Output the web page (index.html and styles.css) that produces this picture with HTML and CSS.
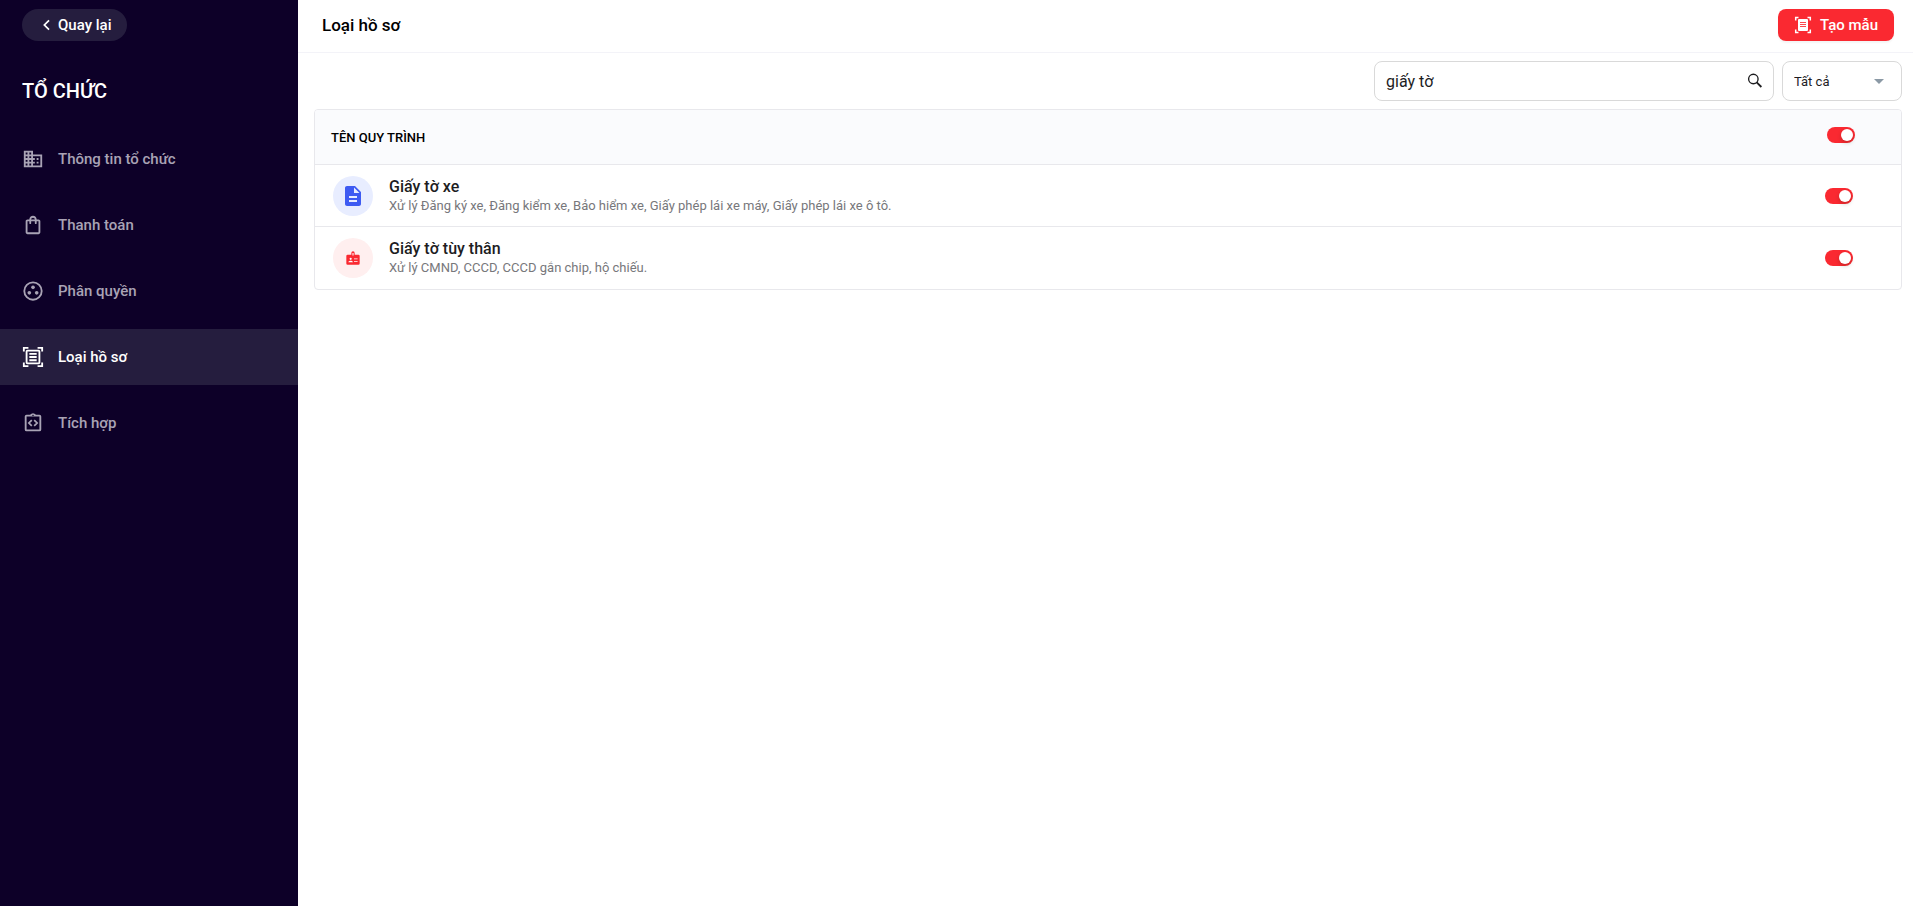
FILE: index.html
```html
<!DOCTYPE html>
<html lang="vi">
<head>
<meta charset="utf-8">
<meta name="viewport" content="width=device-width, initial-scale=1">
<title>Loại hồ sơ</title>
<link rel="stylesheet" href="styles.css">
</head>
<body>
<svg class="sprite" aria-hidden="true">
  <symbol id="i-scan" viewBox="0 0 24 24">
    <path fill="currentColor" d="M1 1h6v2H3v3H1zM17 1h6v5h-2V3h-4zM1 18h2v3h4v2H1zM21 18h2v5h-6v-2h4z"/>
    <path fill="currentColor" fill-rule="evenodd" d="M6 4h12a2 2 0 0 1 2 2v12a2 2 0 0 1-2 2H6a2 2 0 0 1-2-2V6a2 2 0 0 1 2-2zm0 2v12h12V6z"/>
    <path fill="currentColor" d="M8 7.500h8v2H8zM8 11h8v2H8zM8 14.500h8v2H8z"/>
  </symbol>
</svg>
<div class="app">
  <aside class="sidebar">
    <button class="back" type="button">
      <svg class="back-icon" viewBox="0 0 24 24" aria-hidden="true"><path d="M15.500 4l-8 8 8 8" fill="none" stroke="currentColor" stroke-width="3"/></svg>
      Quay lại
    </button>
    <h2 class="org">TỔ CHỨC</h2>
    <nav class="nav">
      <a class="nav-link" href="#org">
        <svg class="nav-icon" viewBox="0 0 24 24" aria-hidden="true"><path fill="currentColor" d="M12 7V3H2v18h20V7H12zM6 19H4v-2h2v2zm0-4H4v-2h2v2zm0-4H4V9h2v2zm0-4H4V5h2v2zm4 12H8v-2h2v2zm0-4H8v-2h2v2zm0-4H8V9h2v2zm0-4H8V5h2v2zm10 12h-8v-2h2v-2h-2v-2h2v-2h-2V9h8v10zm-2-8h-2v2h2v-2zm0 4h-2v2h2v-2z"/></svg>
        Thông tin tổ chức
      </a>
      <a class="nav-link" href="#pay">
        <svg class="nav-icon" viewBox="0 0 24 24" aria-hidden="true"><path fill="currentColor" d="M18 6h-2c0-2.210-1.790-4-4-4S8 3.790 8 6H6c-1.100 0-2 .9-2 2v12c0 1.100.9 2 2 2h12c1.100 0 2-.9 2-2V8c0-1.100-.9-2-2-2zm-6-2c1.100 0 2 .9 2 2h-4c0-1.100.9-2 2-2zm6 16H6V8h2v2c0 .55.45 1 1 1s1-.45 1-1V8h4v2c0 .55.45 1 1 1s1-.45 1-1V8h2v12z"/></svg>
        Thanh toán
      </a>
      <a class="nav-link" href="#roles">
        <svg class="nav-icon" viewBox="0 0 24 24" aria-hidden="true"><circle cx="12" cy="12" r="9.500" fill="none" stroke="currentColor" stroke-width="2"/><g fill="currentColor"><circle cx="12" cy="8" r="2"/><circle cx="8" cy="14" r="2"/><circle cx="16" cy="14" r="2"/></g></svg>
        Phân quyền
      </a>
      <a class="nav-link active" href="#types" aria-current="page">
        <svg class="nav-icon" viewBox="0 0 24 24" aria-hidden="true"><use href="#i-scan"/></svg>
        Loại hồ sơ
      </a>
      <a class="nav-link" href="#integrations">
        <svg class="nav-icon" viewBox="0 0 24 24" aria-hidden="true"><g fill="none" stroke="currentColor"><rect x="4" y="4" width="16" height="16" rx="1" stroke-width="2"/><path d="M10.700 8.800L7.500 12l3.200 3.200M13.300 8.800l3.200 3.200-3.200 3.200" stroke-width="1.900"/></g><path fill="currentColor" d="M8.500 4A3.600 3.600 0 0 1 15.500 4z"/><circle cx="12" cy="3.700" r=".8" fill="#0d0028"/></svg>
        Tích hợp
      </a>
    </nav>
  </aside>
  <main class="main">
    <header class="topbar">
      <h1 class="title">Loại hồ sơ</h1>
      <button class="create" type="button">
        <svg class="create-icon" viewBox="0 0 18 18" aria-hidden="true"><path d="M1.700 4.500V1.500H4.500M13.500 1.500h2.800v3M1.700 13.500v3H4.500M13.500 16.500h2.800v-3" fill="none" stroke="currentColor" stroke-width="1.500"/><rect x="4" y="3" width="10" height="12" rx="1" fill="currentColor"/><path fill="#fa2931" d="M6 6h6v1H6zM6 8h6v1H6zM6 10h6v1H6z" opacity=".85"/></svg>
        Tạo mẫu
      </button>
    </header>
    <div class="filters">
      <div class="search">
        <input class="search-input" type="text" value="giấy tờ" aria-label="Tìm kiếm">
        <button class="search-button" type="button" aria-label="Tìm">
          <svg class="search-icon" viewBox="0 0 24 24" aria-hidden="true"><g fill="none" stroke="currentColor"><circle cx="9.800" cy="9.300" r="6.300" stroke-width="1.800"/><path d="M14.300 13.800l6.200 6.200" stroke-width="2.400"/></g></svg>
        </button>
      </div>
      <div class="picker">
        <select class="select" aria-label="Trạng thái"><option>Tất cả</option></select>
        <svg class="caret" viewBox="0 0 10 5" aria-hidden="true"><path d="M0 0h10L5 5z" fill="currentColor"/></svg>
      </div>
    </div>
    <div class="card">
      <table class="table">
        <thead>
          <tr>
            <th class="name-head" scope="col">TÊN QUY TRÌNH</th>
            <th class="toggle-head"><input class="toggle" type="checkbox" role="switch" checked aria-label="Bật tất cả"></th>
          </tr>
        </thead>
        <tbody>
          <tr>
            <td class="name-cell">
              <div class="item">
                <span class="badge blue"><svg class="badge-icon" viewBox="0 0 24 24" aria-hidden="true"><path fill="currentColor" d="M14 2H6c-1.100 0-2 .9-2 2v16c0 1.100.9 2 2 2h12c1.100 0 2-.9 2-2V8l-6-6zm2 16H8v-2h8v2zm0-4H8v-2h8v2zm-3-5V3.500L18.500 9H13z"/></svg></span>
                <div class="item-text">
                  <div class="item-title">Giấy tờ xe</div>
                  <div class="item-desc">Xử lý Đăng ký xe, Đăng kiểm xe, Bảo hiểm xe, Giấy phép lái xe máy, Giấy phép lái xe ô tô.</div>
                </div>
              </div>
            </td>
            <td class="toggle-cell"><input class="toggle" type="checkbox" role="switch" checked aria-label="Giấy tờ xe"></td>
          </tr>
          <tr>
            <td class="name-cell">
              <div class="item">
                <span class="badge red"><svg class="badge-icon" viewBox="0 0 24 24" aria-hidden="true"><path fill="currentColor" fill-rule="evenodd" d="M5.500 8H10V6a2 2 0 0 1 4 0v2h4.500A1.500 1.500 0 0 1 20 9.500v9a1.500 1.500 0 0 1-1.500 1.500h-13A1.500 1.500 0 0 1 4 18.500v-9A1.500 1.500 0 0 1 5.500 8zM11.300 6v3h1.400V6z"/><g fill="#fff"><circle cx="9.200" cy="13" r="1.300"/><path d="M6.500 17c0-2.400 5.400-2.400 5.400 0zM13.200 12.500h4.300v1h-4.300zM13.200 15.500h4.300v1h-4.300z"/></g></svg></span>
                <div class="item-text">
                  <div class="item-title">Giấy tờ tùy thân</div>
                  <div class="item-desc">Xử lý CMND, CCCD, CCCD gắn chip, hộ chiếu.</div>
                </div>
              </div>
            </td>
            <td class="toggle-cell"><input class="toggle" type="checkbox" role="switch" checked aria-label="Giấy tờ tùy thân"></td>
          </tr>
        </tbody>
      </table>
    </div>
  </main>
</div>
</body>
</html>
```
FILE: styles.css
```css
* { box-sizing: border-box; }
body {
  margin: 0;
  background: #fff;
  color: #1d1d1f;
  font-family: Roboto, "Noto Sans", sans-serif;
  font-size: 14px;
}
button, input, select { font: inherit; color: inherit; }
.sprite { display: none; }
.app { display: flex; min-height: 100vh; }

.sidebar { flex: 0 0 298px; background: #0d0028; color: #fff; padding-top: 9px; }
.back {
  display: flex;
  align-items: center;
  gap: 4px;
  height: 32px;
  margin-left: 22px;
  padding: 0 16px 0 18px;
  border: 0;
  border-radius: 16px;
  background: #251d3e;
  font-size: 15px;
  font-weight: 500;
}
.back-icon { width: 14px; height: 14px; }
.org { margin: 36px 22px 0; font-size: 20px; font-weight: 500; line-height: 28px; }
.nav { display: flex; flex-direction: column; gap: 10px; margin-top: 26px; }
.nav-link {
  display: flex;
  align-items: center;
  gap: 14px;
  height: 56px;
  padding: 0 22px;
  color: #a9a3b5;
  font-size: 15px;
  font-weight: 500;
  text-decoration: none;
}
.nav-link.active { background: #251d3e; color: #fff; }
.nav-icon { width: 22px; height: 22px; }

.main { flex: 1; min-width: 0; }
.topbar {
  display: flex;
  align-items: center;
  justify-content: space-between;
  height: 53px;
  padding: 0 19px 2px 24px;
  border-bottom: 1px solid #f3f3f8;
}
.title { margin: 0; color: #000; font-size: 17px; font-weight: 500; line-height: 24px; }
.create {
  display: flex;
  align-items: center;
  gap: 8px;
  height: 32px;
  padding: 0 16px;
  border: 0;
  border-radius: 8px;
  background: #fa2931;
  box-shadow: 0 2px 2px #0000000b;
  color: #fff;
  font-size: 15px;
  font-weight: 500;
}
.create-icon { width: 18px; height: 18px; }

.filters { display: flex; justify-content: flex-end; gap: 8px; padding: 8px 11px 8px 16px; }
.search {
  display: flex;
  align-items: center;
  width: 400px;
  height: 40px;
  border: 1px solid #d9d9d9;
  border-radius: 8px;
}
.search-input { flex: 1; min-width: 0; padding: 0 11px; border: 0; outline: 0; background: none; font-size: 16px; }
.search-button { display: flex; padding: 0 9px; border: 0; background: none; }
.search-icon { width: 18px; height: 18px; }
.picker { position: relative; width: 120px; height: 40px; }
.select {
  width: 100%;
  height: 100%;
  padding: 0 11px;
  border: 1px solid #d9d9d9;
  border-radius: 8px;
  appearance: none;
  background: #fff;
  font-size: 13px;
}
.caret { position: absolute; top: 18px; right: 18px; width: 10px; height: 5px; color: #8b99a5; pointer-events: none; }

.card { margin: 0 11px 0 16px; border: 1px solid #e8e8ec; border-radius: 4px; overflow: hidden; }
.table { width: 100%; border-collapse: separate; border-spacing: 0; }
.table th { height: 55px; padding: 0; border-bottom: 1px solid #e8e8ec; background: #fafbfd; text-align: left; }
.table .name-head { padding-left: 16px; color: #000; font-size: 13px; font-weight: 500; }
.toggle-head { width: 76px; }
.table .toggle-head { padding: 0 0 5px 2px; }
.table td { height: 62px; padding: 0; border-bottom: 1px solid #e8e8ec; }
.table tbody tr:last-child td { border-bottom: 0; }
.table .name-cell { padding-left: 18px; }
.item { display: flex; align-items: center; gap: 16px; }
.badge { display: flex; align-items: center; justify-content: center; width: 40px; height: 40px; border-radius: 50%; }
.badge.blue { background: #e8edff; color: #3e5bf2; }
.badge.red { background: #ffefef; color: #fa2931; }
.blue .badge-icon { width: 24px; height: 24px; }
.red .badge-icon { width: 20px; height: 20px; }
.item-title { font-size: 16px; font-weight: 500; line-height: 20px; }
.item-desc { color: #77777b; font-size: 13px; line-height: 18px; }

.toggle {
  display: block;
  appearance: none;
  width: 28px;
  height: 16px;
  margin: 0;
  border-radius: 8px;
  background: #fa2931;
}
.toggle::before {
  content: "";
  display: block;
  width: 12px;
  height: 12px;
  margin: 2px 0 0 2px;
  border-radius: 50%;
  background: #fff;
  box-shadow: 0 2px 4px #00230b33;
}
.toggle:checked::before { margin-left: 14px; }
```
